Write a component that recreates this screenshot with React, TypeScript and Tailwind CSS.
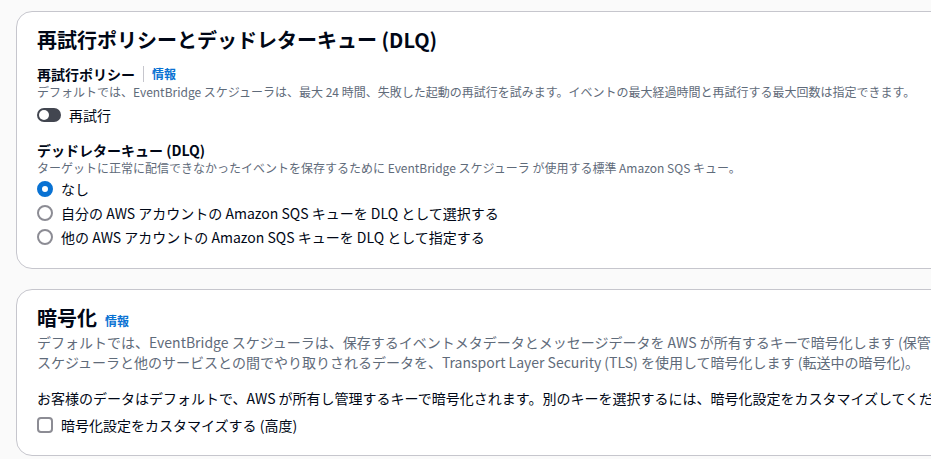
import { useState } from 'react';

const FONT = "font-['Noto_Sans_CJK_JP','Noto_Sans',sans-serif]";

function Info() {
  return <span className="text-xs font-bold text-[#0972d3]">情報</span>;
}

function Radio({ checked, label }: { checked: boolean; label: string }) {
  return (
    <label className="flex h-6 items-center gap-2">
      <span
        className={
          checked
            ? 'h-4 w-4 rounded-full border-[5px] border-[#0972d3] bg-white'
            : 'h-4 w-4 rounded-full border-2 border-[#8c8c94] bg-white'
        }
      />
      <span className="text-sm text-[#000716]">{label}</span>
    </label>
  );
}

export default function App() {
  const [retry, setRetry] = useState(false);
  const [dlq, setDlq] = useState(0);
  const options = [
    'なし',
    '自分の AWS アカウントの Amazon SQS キューを DLQ として選択する',
    '他の AWS アカウントの Amazon SQS キューを DLQ として指定する',
  ];

  return (
    <div className={`${FONT} h-[459px] w-[931px] overflow-hidden bg-[#fafafa] pl-4 pt-[11px]`}>
      {/* Retry policy & DLQ */}
      <section className="w-[1200px] rounded-2xl border border-[#c6c6cd] bg-white px-5 pb-[19px] pt-4">
        <h2 className="text-xl font-bold leading-6 text-[#000716]">
          再試行ポリシーとデッドレターキュー (DLQ)
        </h2>

        <div className="mt-3 flex items-center gap-2 leading-5">
          <span className="text-sm font-bold text-[#000716]">再試行ポリシー</span>
          <span className="h-4 w-px bg-[#c6c6cd]" />
          <Info />
        </div>
        <p className="whitespace-nowrap text-xs leading-4 text-[#5f6b7a]">
          デフォルトでは、EventBridge スケジューラは、最大 24 時間、失敗した起動の再試行を試みます。イベントの最大経過時間と再試行する最大回数は指定できます。
        </p>
        <button onClick={() => setRetry(!retry)} className="mt-[5px] flex h-5 items-center gap-2">
          <span
            className={
              retry
                ? 'flex h-3.5 w-6 items-center justify-end rounded-full bg-[#0972d3] px-0.5'
                : 'flex h-3.5 w-6 items-center rounded-full bg-[#424650] px-0.5'
            }
          >
            <span className="h-2.5 w-2.5 rounded-full bg-white" />
          </span>
          <span className="text-sm text-[#000716]">再試行</span>
        </button>

        <h3 className="mt-[15px] text-sm font-bold leading-5 text-[#000716]">デッドレターキュー (DLQ)</h3>
        <p className="whitespace-nowrap text-xs leading-4 text-[#5f6b7a]">
          ターゲットに正常に配信できなかったイベントを保存するために EventBridge スケジューラ が使用する標準 Amazon SQS キュー。
        </p>
        <div className="mt-px flex flex-col" onClick={() => setDlq((dlq + 1) % 3)}>
          {options.map((o, i) => (
            <Radio key={o} checked={dlq === i} label={o} />
          ))}
        </div>
      </section>

      {/* Encryption */}
      <section className="mt-5 w-[1200px] rounded-2xl border border-[#c6c6cd] bg-white px-5 pb-5 pt-4">
        <div className="flex items-baseline gap-2">
          <h2 className="text-xl font-bold leading-6 text-[#000716]">暗号化</h2>
          <Info />
        </div>
        <p className="mt-0.5 whitespace-nowrap text-sm leading-5 text-[#5f6b7a]">
          デフォルトでは、EventBridge スケジューラは、保存するイベントメタデータとメッセージデータを AWS が所有するキーで暗号化します (保管時の暗号化)。EventBridge
          <br />
          スケジューラと他のサービスとの間でやり取りされるデータを、Transport Layer Security (TLS) を使用して暗号化します (転送中の暗号化)。
        </p>
        <p className="mt-4 whitespace-nowrap text-sm leading-5 text-[#000716]">
          お客様のデータはデフォルトで、AWS が所有し管理するキーで暗号化されます。別のキーを選択するには、暗号化設定をカスタマイズしてください (高度)。
        </p>
        <label className="mt-[7px] flex h-5 items-center gap-2">
          <span className="h-4 w-4 rounded border-2 border-[#8c8c94] bg-white" />
          <span className="text-sm text-[#000716]">暗号化設定をカスタマイズする (高度)</span>
        </label>
      </section>
    </div>
  );
}
